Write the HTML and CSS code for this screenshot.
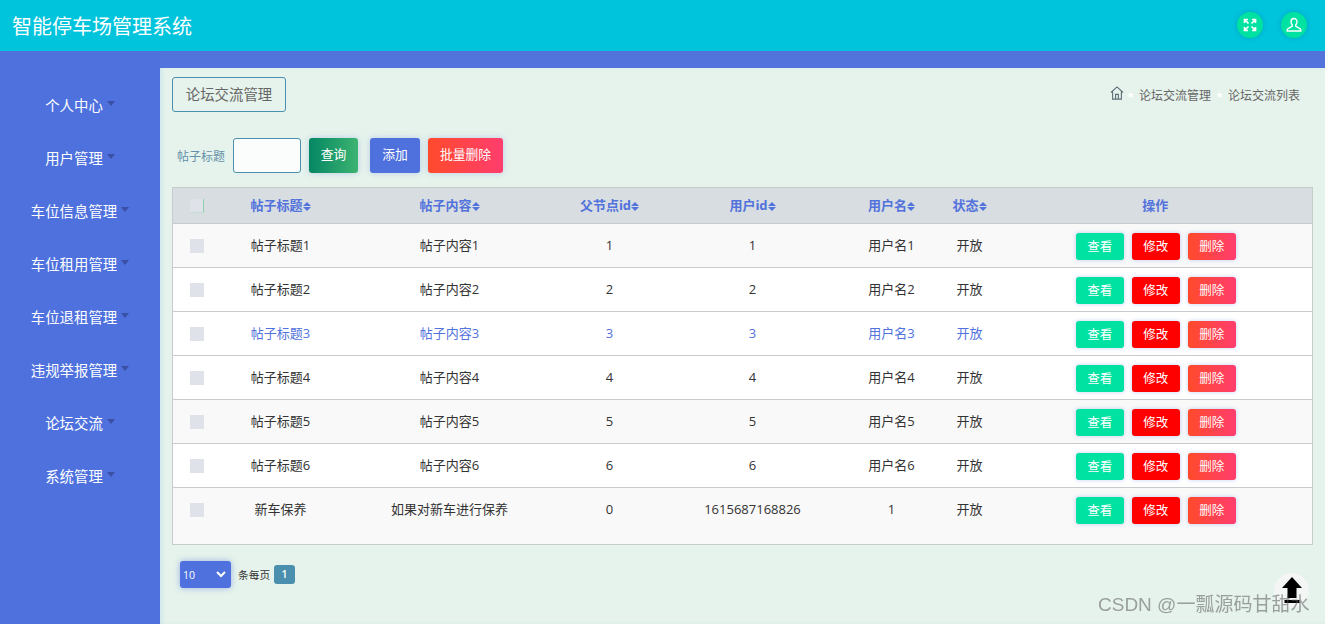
FILE: index.html
```html
<!DOCTYPE html>
<html lang="zh">
<head>
    <meta charset="UTF-8">
    <title>智能停车场管理系统</title>
    <link rel="stylesheet" href="styles.css">
</head>
<body>
    <svg class="defs" width="0" height="0">
        <symbol id="sort" viewBox="0 0 8 9"><path d="M4 0 8 4H0zM0 5h8L4 9z"/></symbol>
    </svg>
    <header class="navbar">
        <div class="brand">智能停车场管理系统</div>
        <div class="nav-icons">
            <span class="round-icon">
                <svg width="14" height="14" viewBox="0 0 14 14" fill="none" stroke="#fff" stroke-width="1.7"><path d="M1.500 5V1.500H5M9 1.500h3.500V5M12.500 9v3.500H9M5 12.500H1.500V9M2 2l3.500 3.500M12 2 8.500 5.500M12 12 8.500 8.500M2 12l3.500-3.500"/></svg>
            </span>
            <span class="round-icon">
                <svg width="16" height="16" viewBox="0 0 16 16" fill="none" stroke="#fff" stroke-width="1.400"><path d="M8 1.500c-1.800 0-3 1.300-3 3.200 0 1.400.600 2.500 1.300 3.200v1.300L1.800 11.800c-.500.300-.600.700-.600 1.200v1h13.600v-1c0-.500-.100-.900-.600-1.200L9.700 9.200V7.900c.700-.700 1.300-1.800 1.300-3.200 0-1.900-1.200-3.200-3-3.200z"/></svg>
            </span>
        </div>
    </header>

    <div class="layout">
        <nav class="sidebar">
            <a class="menu-item">个人中心<i class="caret"></i></a>
            <a class="menu-item">用户管理<i class="caret"></i></a>
            <a class="menu-item">车位信息管理<i class="caret"></i></a>
            <a class="menu-item">车位租用管理<i class="caret"></i></a>
            <a class="menu-item">车位退租管理<i class="caret"></i></a>
            <a class="menu-item">违规举报管理<i class="caret"></i></a>
            <a class="menu-item">论坛交流<i class="caret"></i></a>
            <a class="menu-item">系统管理<i class="caret"></i></a>
        </nav>

        <main class="content">
            <div class="top-bar">
                <div class="page-title">论坛交流管理</div>
                <div class="crumbs">
                    <svg class="home" width="14" height="14" viewBox="0 0 15 15" fill="none" stroke="#5f6f78" stroke-width="1.200"><path d="M1 7 7.500 1 14 7M2.800 6v8h9.400V6M6 14V9h3v5"/></svg>
                    <span class="crumb-sep">★</span>
                    <span>论坛交流管理</span>
                    <span class="crumb-sep">★</span>
                    <span>论坛交流列表</span>
                </div>
            </div>

            <form class="search-bar">
                <label class="search-label">帖子标题</label>
                <input class="search-input" type="text">
                <button type="button" class="btn btn-search">查询</button>
                <button type="button" class="btn btn-add">添加</button>
                <button type="button" class="btn btn-batch">批量删除</button>
            </form>

            <table class="data-table">
                <colgroup>
                    <col class="c-check"><col class="c-title"><col class="c-body"><col class="c-parent">
                    <col class="c-user"><col class="c-name"><col class="c-state"><col class="c-ops">
                </colgroup>
                <thead>
                    <tr>
                        <th class="check-cell"><span class="check check-head"></span></th>
                        <th>帖子标题<svg class="sort"><use href="#sort"/></svg></th>
                        <th>帖子内容<svg class="sort"><use href="#sort"/></svg></th>
                        <th>父节点id<svg class="sort"><use href="#sort"/></svg></th>
                        <th>用户id<svg class="sort"><use href="#sort"/></svg></th>
                        <th>用户名<svg class="sort"><use href="#sort"/></svg></th>
                        <th>状态<svg class="sort"><use href="#sort"/></svg></th>
                        <th>操作</th>
                    </tr>
                </thead>
                <tbody>
                    <tr class="row-alt">
                        <td class="check-cell"><span class="check"></span></td>
                        <td>帖子标题1</td><td>帖子内容1</td><td>1</td><td>1</td><td>用户名1</td><td>开放</td>
                        <td><div class="ops"><a class="mini mini-view">查看</a><a class="mini mini-edit">修改</a><a class="mini mini-del">删除</a></div></td>
                    </tr>
                    <tr>
                        <td class="check-cell"><span class="check"></span></td>
                        <td>帖子标题2</td><td>帖子内容2</td><td>2</td><td>2</td><td>用户名2</td><td>开放</td>
                        <td><div class="ops"><a class="mini mini-view">查看</a><a class="mini mini-edit">修改</a><a class="mini mini-del">删除</a></div></td>
                    </tr>
                    <tr class="row-hover">
                        <td class="check-cell"><span class="check"></span></td>
                        <td>帖子标题3</td><td>帖子内容3</td><td>3</td><td>3</td><td>用户名3</td><td>开放</td>
                        <td><div class="ops"><a class="mini mini-view">查看</a><a class="mini mini-edit">修改</a><a class="mini mini-del">删除</a></div></td>
                    </tr>
                    <tr>
                        <td class="check-cell"><span class="check"></span></td>
                        <td>帖子标题4</td><td>帖子内容4</td><td>4</td><td>4</td><td>用户名4</td><td>开放</td>
                        <td><div class="ops"><a class="mini mini-view">查看</a><a class="mini mini-edit">修改</a><a class="mini mini-del">删除</a></div></td>
                    </tr>
                    <tr class="row-alt">
                        <td class="check-cell"><span class="check"></span></td>
                        <td>帖子标题5</td><td>帖子内容5</td><td>5</td><td>5</td><td>用户名5</td><td>开放</td>
                        <td><div class="ops"><a class="mini mini-view">查看</a><a class="mini mini-edit">修改</a><a class="mini mini-del">删除</a></div></td>
                    </tr>
                    <tr>
                        <td class="check-cell"><span class="check"></span></td>
                        <td>帖子标题6</td><td>帖子内容6</td><td>6</td><td>6</td><td>用户名6</td><td>开放</td>
                        <td><div class="ops"><a class="mini mini-view">查看</a><a class="mini mini-edit">修改</a><a class="mini mini-del">删除</a></div></td>
                    </tr>
                    <tr class="row-alt row-last">
                        <td class="check-cell"><span class="check"></span></td>
                        <td>新车保养</td><td>如果对新车进行保养</td><td>0</td><td>1615687168826</td><td>1</td><td>开放</td>
                        <td><div class="ops"><a class="mini mini-view">查看</a><a class="mini mini-edit">修改</a><a class="mini mini-del">删除</a></div></td>
                    </tr>
                </tbody>
            </table>

            <div class="pager">
                <div class="select-wrap">
                    <select class="page-size"><option>10</option></select>
                    <svg class="chevron" width="10" height="7" viewBox="0 0 10 7" fill="none" stroke="#fff" stroke-width="2"><path d="M1 1l4 4 4-4"/></svg>
                </div>
                <span class="pager-text">条每页</span>
                <span class="page-num">1</span>
            </div>
        </main>
    </div>

    <div class="back-top">
        <svg width="22" height="28" viewBox="0 0 22 28"><path d="M11 0 21 11H15.500V21H6.500V11H1zM3.500 23h15v3h-15z"/></svg>
    </div>
    <div class="watermark">CSDN @一瓢源码甘甜水</div>
</body>
</html>
```

FILE: styles.css
```css
*{
    margin: 0;
    padding: 0;
    box-sizing: border-box;
}

html, body{
    height: 100%;
    overflow: hidden;
}

body{
    font-family: "Open Sans", "Noto Sans CJK SC", sans-serif;
    font-size: 13px;
    color: #333;
    background-color: #5272dc;
}

.defs{
    position: absolute;
}

.navbar{
    height: 51px;
    padding: 0 18px 1px 12px;
    background-color: #00c3dc;
    display: flex;
    align-items: center;
    justify-content: space-between;
}

.brand{
    font-size: 20px;
    color: #fff;
}

.nav-icons{
    display: flex;
    gap: 18px;
}

.round-icon{
    width: 26px;
    height: 26px;
    border-radius: 50%;
    background-color: #00e2a1;
    box-shadow: 0 0 4px rgba(0, 120, 140, 0.4);
    display: flex;
    align-items: center;
    justify-content: center;
}

.layout{
    display: flex;
    height: calc(100% - 51px);
}

.sidebar{
    width: 160px;
    flex-shrink: 0;
    padding-top: 27px;
    background-color: #4e71de;
}

.menu-item{
    height: 53px;
    color: #fff;
    font-size: 14.4px;
    display: flex;
    align-items: center;
    justify-content: center;
}

.caret{
    width: 0;
    height: 0;
    margin: -2px 0 0 4px;
    border-left: 4px solid transparent;
    border-right: 4px solid transparent;
    border-top: 5px solid #3a50a5;
}

.content{
    flex: 1;
    margin-top: 17px;
    padding: 9px 12px;
    background-color: #e6f3ec;
    box-shadow: inset 3px 0 3px rgba(82, 170, 220, 0.12);
}

.top-bar{
    display: flex;
    align-items: center;
    justify-content: space-between;
    height: 35px;
}

.page-title{
    width: 114px;
    height: 35px;
    line-height: 33px;
    text-align: center;
    font-size: 14.4px;
    color: #666;
    border: 1px solid #4a8fad;
    border-radius: 3px;
}

.crumbs{
    display: flex;
    align-items: center;
    padding-right: 13px;
    font-size: 12px;
    color: #666;
}

.home{
    margin: -3px -2px 0 0;
}

.crumb-sep{
    width: 17px;
    text-align: center;
    font-family: "DejaVu Sans", sans-serif;
    font-size: 9px;
    color: #fff;
}

.search-bar{
    display: flex;
    align-items: center;
    height: 35px;
    margin: 26px 0 14px;
    padding-left: 5px;
}

.search-label{
    width: 56px;
    font-size: 12px;
    color: #6390a8;
}

.search-input{
    width: 68px;
    height: 35px;
    margin-right: 8px;
    background-color: #fafdfc;
    border: 1px solid #4a8fad;
    border-radius: 3px;
}

.btn{
    height: 35px;
    padding-bottom: 4px;
    border: 0;
    border-radius: 3px;
    color: #fff;
    font-family: inherit;
    font-size: 12.8px;
    box-shadow: 0 0 6px rgba(82, 114, 220, 0.3);
}

.btn-search{
    width: 49px;
    margin-right: 12px;
    background: linear-gradient(90deg, #058763, #3cb371);
}

.btn-add{
    width: 50px;
    margin-right: 8px;
    background-color: #4e71de;
}

.btn-batch{
    width: 75px;
    background: linear-gradient(90deg, #ff4a2b, #ff3d6e);
}

.data-table{
    width: 1140px;
    table-layout: fixed;
    border-collapse: collapse;
    border: 1px solid #c8cbcc;
    background-color: #fff;
}

.c-check{ width: 46px; }
.c-title{ width: 124px; }
.c-body{ width: 214px; }
.c-parent{ width: 106px; }
.c-user{ width: 180px; }
.c-name{ width: 98px; }
.c-state{ width: 58px; }
.c-ops{ width: 314px; }

.data-table th{
    height: 36px;
    padding-bottom: 2px;
    background-color: #d8dde1;
    color: #5272dc;
    font-size: 13px;
    font-weight: 700;
    text-align: center;
    vertical-align: middle;
}

.data-table td{
    height: 44px;
    padding-top: 9px;
    line-height: 24px;
    text-align: center;
    vertical-align: top;
    border-top: 1px solid #c8cbcc;
}

.row-alt{
    background-color: #f9f9f9;
}

.row-hover{
    color: #5272dc;
}

.data-table .row-last td{
    height: 57px;
}

.data-table .check-cell{
    padding-left: 17px;
    text-align: left;
}

.check{
    display: block;
    width: 14px;
    height: 14px;
    margin-top: 6px;
    background-color: #dfe3e9;
}

.check-head{
    margin-top: 2px;
    border-right: 1px solid #8fd0b0;
    border-bottom: 1px solid #c4dcd2;
}

.sort{
    width: 8px;
    height: 9px;
    fill: #5272dc;
    vertical-align: -1px;
}

.ops{
    display: flex;
    justify-content: center;
    gap: 8px;
    margin-left: 1px;
}

.mini{
    width: 48px;
    height: 27px;
    line-height: 27px;
    border-radius: 3px;
    color: #fff;
    font-size: 12.5px;
    box-shadow: 0 0 4px rgba(82, 114, 220, 0.35);
}

.mini-view{
    background-color: #00e2a1;
}

.mini-edit{
    background-color: #ff0000;
}

.mini-del{
    background: linear-gradient(90deg, #ff4a2b, #ff3d6e);
}

.pager{
    display: flex;
    align-items: center;
    margin: 16px 0 0 8px;
}

.select-wrap{
    position: relative;
    width: 51px;
    height: 27px;
    margin-right: 7px;
}

.page-size{
    width: 51px;
    height: 27px;
    padding-left: 3px;
    border: 0;
    border-radius: 3px;
    appearance: none;
    background-color: #4e71de;
    color: #fff;
    font-family: inherit;
    font-size: 10.5px;
    box-shadow: 0 0 6px rgba(82, 114, 220, 0.5);
}

.chevron{
    position: absolute;
    top: 10px;
    right: 5px;
}

.pager-text{
    font-size: 10.7px;
    margin-right: 4px;
}

.page-num{
    width: 21px;
    height: 19px;
    line-height: 19px;
    text-align: center;
    border-radius: 3px;
    background-color: #4a8fad;
    color: #fff;
    font-size: 10.5px;
    font-weight: 600;
}

.back-top{
    position: fixed;
    left: 1274px;
    top: 573px;
    width: 35px;
    height: 35px;
    border-radius: 50%;
    background-color: #f4f6f5;
    display: flex;
    align-items: center;
    justify-content: center;
}

.watermark{
    position: fixed;
    left: 1098px;
    top: 593px;
    font-family: "Liberation Sans", "Noto Sans CJK SC", sans-serif;
    font-size: 19px;
    line-height: 24px;
    white-space: nowrap;
    color: rgba(90, 90, 90, 0.55);
}
```
